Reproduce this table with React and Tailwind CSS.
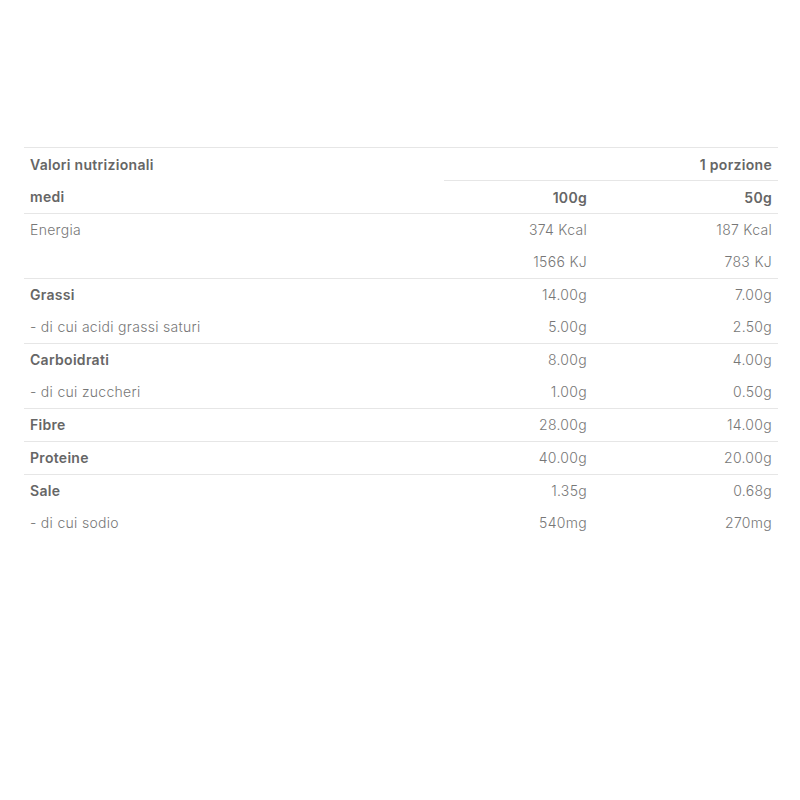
const GROUPS = [
  [
    { label: 'Energia', a: '374 Kcal', b: '187 Kcal' },
    { label: '', a: '1566 KJ', b: '783 KJ' },
  ],
  [
    { label: 'Grassi', a: '14.00g', b: '7.00g', bold: true },
    { label: '- di cui acidi grassi saturi', a: '5.00g', b: '2.50g' },
  ],
  [
    { label: 'Carboidrati', a: '8.00g', b: '4.00g', bold: true },
    { label: '- di cui zuccheri', a: '1.00g', b: '0.50g' },
  ],
  [{ label: 'Fibre', a: '28.00g', b: '14.00g', bold: true }],
  [{ label: 'Proteine', a: '40.00g', b: '20.00g', bold: true }],
  [
    { label: 'Sale', a: '1.35g', b: '0.68g', bold: true },
    { label: '- di cui sodio', a: '540mg', b: '270mg' },
  ],
];

const COLS = 'grid grid-cols-[420px_149px_185px]';

function Row({ label, a, b, bold }) {
  return (
    <div className={`${COLS} h-[32px] items-center pb-[1px]`}>
      <div className={`pl-[6px] ${bold ? 'font-semibold text-[#666]' : 'font-light text-[#777]'}`}>
        {label}
      </div>
      <div className="pr-[6px] text-right font-light text-[#777]">{a}</div>
      <div className="pr-[6px] text-right font-light text-[#777]">{b}</div>
    </div>
  );
}

export default function App() {
  return (
    <div className="min-h-[800px] bg-white pt-[147px] font-['Inter',sans-serif] text-[14px] tracking-[0.3px]">
      <div className="mx-[24px] w-[754px]">
        {/* header: label spans two lines, portion header has its own rule */}
        <div className={`${COLS} border-t border-[#e6e6e6]`}>
          <div className="row-span-2 pl-[6px] font-semibold text-[#666]">
            <div className="flex h-[32px] items-center">Valori nutrizionali</div>
            <div className="flex h-[33px] items-center">medi</div>
          </div>
          <div className="col-span-2 flex h-[32px] items-center justify-end pr-[6px] font-semibold text-[#666]">
            1 porzione
          </div>
          <div className="flex h-[33px] items-center justify-end border-t border-[#e6e6e6] pr-[6px] font-semibold text-[#666]">
            100g
          </div>
          <div className="flex h-[33px] items-center justify-end border-t border-[#e6e6e6] pr-[6px] font-semibold text-[#666]">
            50g
          </div>
        </div>

        {GROUPS.map((rows, i) => (
          <div key={i} className="border-t border-[#e6e6e6]">
            {rows.map((r, j) => (
              <Row key={j} {...r} />
            ))}
          </div>
        ))}
      </div>
    </div>
  );
}
